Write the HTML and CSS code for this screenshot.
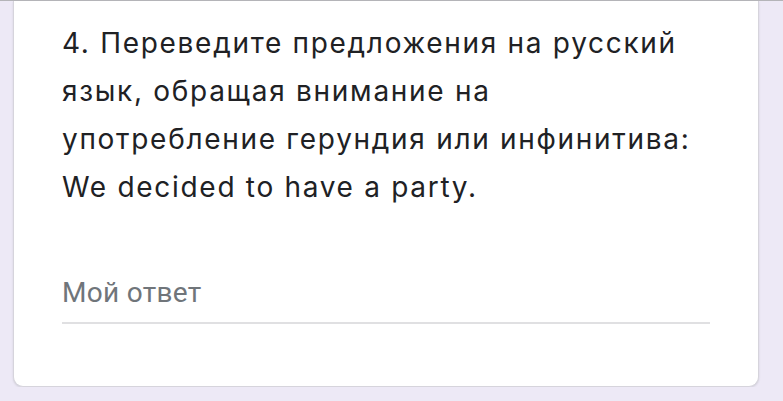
FILE: index.html
```html
<!DOCTYPE html>
<html lang="ru">
<head>
<meta charset="utf-8">
<title>Вопрос</title>
<link rel="stylesheet" href="styles.css">
</head>
<body>
<div class="page">
  <div class="card">
    <div class="question">4. Переведите предложения на русский язык, обращая внимание на употребление герундия или инфинитива: We decided to have a party.</div>
    <div class="answer">
      <div class="placeholder">Мой ответ</div>
      <div class="underline"></div>
    </div>
  </div>
</div>
</body>
</html>
```

FILE: styles.css
```css
html, body {
  margin: 0;
  padding: 0;
  background: #ede9f6;
}
body {
  border-top: 1px solid #b4b4b8;
}
.page {
  padding: 0 24px 0 13px;
}
.card {
  background: #fff;
  border: 1px solid #d6d4dc;
  border-top: none;
  border-radius: 0 0 10px 10px;
  box-shadow: 0 1px 2px rgba(60, 64, 67, 0.15);
  padding: 18px 48px 62px 48px;
}
.question {
  max-width: 644px;
  font-family: Inter, "Noto Sans", "Liberation Sans", sans-serif;
  font-size: 28px;
  line-height: 48px;
  letter-spacing: 1.7px;
  color: #202124;
}
.answer {
  margin-top: 66px;
}
.placeholder {
  font-family: Roboto, "Noto Sans", "Liberation Sans", sans-serif;
  font-size: 28px;
  line-height: 32px;
  letter-spacing: 0.3px;
  color: #70757a;
}
.underline {
  height: 2px;
  background: #e0e0e2;
  margin-top: 13px;
}
```
